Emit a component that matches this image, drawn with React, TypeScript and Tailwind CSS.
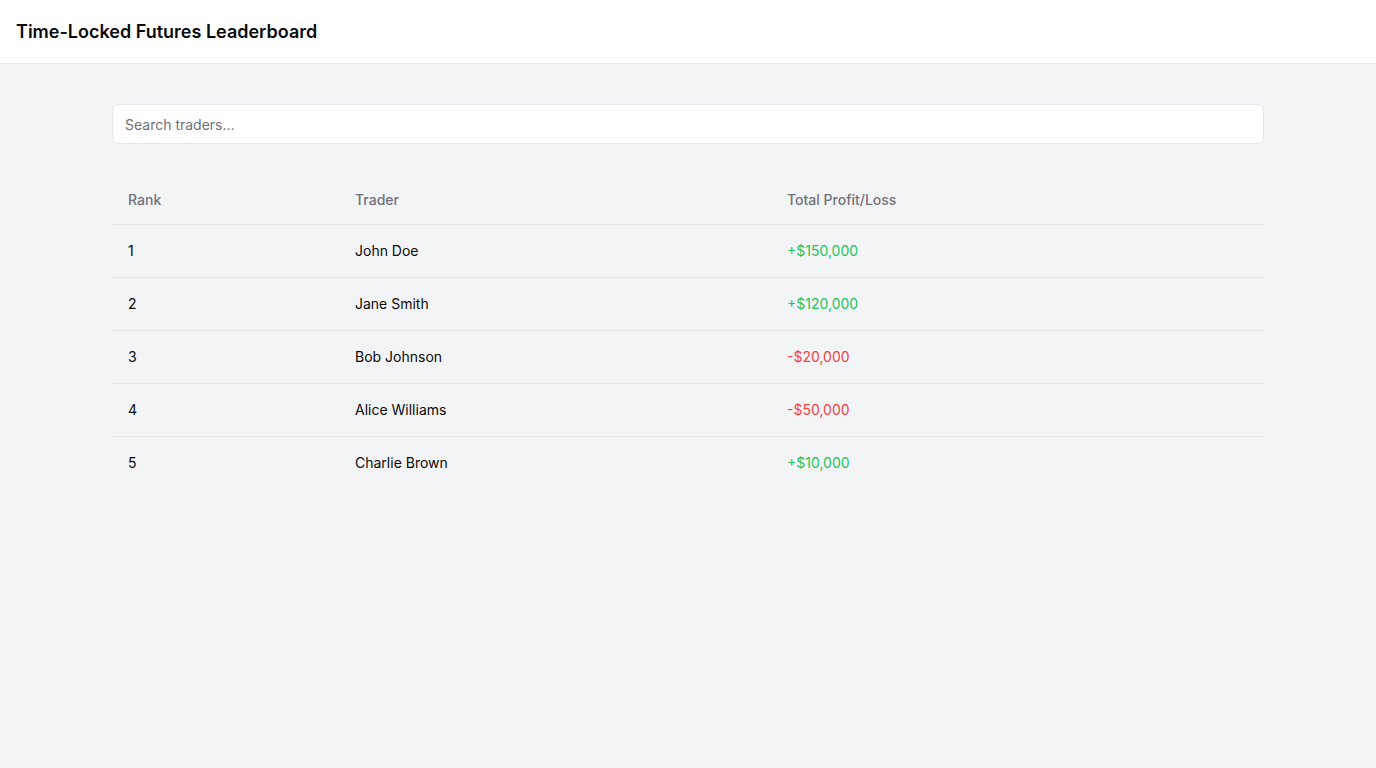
import React from "react";

const rows = [
  { rank: 1, name: "John Doe", pl: "+$150,000", up: true },
  { rank: 2, name: "Jane Smith", pl: "+$120,000", up: true },
  { rank: 3, name: "Bob Johnson", pl: "-$20,000", up: false },
  { rank: 4, name: "Alice Williams", pl: "-$50,000", up: false },
  { rank: 5, name: "Charlie Brown", pl: "+$10,000", up: true },
];

export default function App() {
  return (
    <div className="min-h-screen bg-[#f3f4f6] font-['Inter',sans-serif] text-[#0a0a0a]">
      <header className="h-16 bg-white border-b border-[#e5e7eb] flex items-center px-4">
        <h1 className="text-lg font-semibold">Time-Locked Futures Leaderboard</h1>
      </header>
      <main className="max-w-6xl mx-auto pt-10">
        <input
          type="text"
          placeholder="Search traders..."
          className="w-full h-10 rounded-md border border-[#e5e7eb] bg-white px-3 text-sm placeholder:text-[#71717a] outline-none"
        />
        <table className="w-full mt-8 text-sm">
          <thead>
            <tr className="border-b border-[#e5e7eb]">
              <th className="h-12 px-4 text-left font-medium text-[#71717a] w-[227px]">Rank</th>
              <th className="h-12 px-4 text-left font-medium text-[#71717a] w-[432px]">Trader</th>
              <th className="h-12 px-4 text-left font-medium text-[#71717a]">Total Profit/Loss</th>
            </tr>
          </thead>
          <tbody>
            {rows.map((r, i) => (
              <tr key={r.rank} className={i < rows.length - 1 ? "border-b border-[#e5e7eb]" : ""}>
                <td className="p-4">{r.rank}</td>
                <td className="p-4">{r.name}</td>
                <td className={"p-4 " + (r.up ? "text-[#22c55e]" : "text-[#ef4444]")}>{r.pl}</td>
              </tr>
            ))}
          </tbody>
        </table>
      </main>
    </div>
  );
}
